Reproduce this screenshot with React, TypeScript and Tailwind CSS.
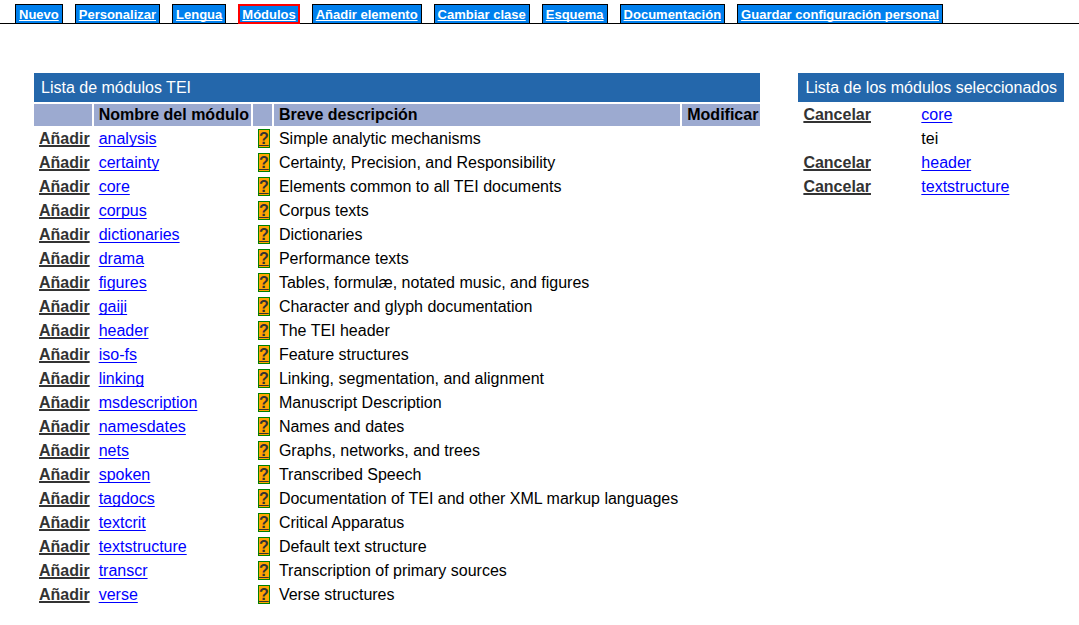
const tabs = [
  "Nuevo",
  "Personalizar",
  "Lengua",
  "Módulos",
  "Añadir elemento",
  "Cambiar clase",
  "Esquema",
  "Documentación",
  "Guardar configuración personal",
];

const activeTab = "Módulos";

const modules = [
  { name: "analysis", description: "Simple analytic mechanisms" },
  { name: "certainty", description: "Certainty, Precision, and Responsibility" },
  { name: "core", description: "Elements common to all TEI documents" },
  { name: "corpus", description: "Corpus texts" },
  { name: "dictionaries", description: "Dictionaries" },
  { name: "drama", description: "Performance texts" },
  { name: "figures", description: "Tables, formulæ, notated music, and figures" },
  { name: "gaiji", description: "Character and glyph documentation" },
  { name: "header", description: "The TEI header" },
  { name: "iso-fs", description: "Feature structures" },
  { name: "linking", description: "Linking, segmentation, and alignment" },
  { name: "msdescription", description: "Manuscript Description" },
  { name: "namesdates", description: "Names and dates" },
  { name: "nets", description: "Graphs, networks, and trees" },
  { name: "spoken", description: "Transcribed Speech" },
  { name: "tagdocs", description: "Documentation of TEI and other XML markup languages" },
  { name: "textcrit", description: "Critical Apparatus" },
  { name: "textstructure", description: "Default text structure" },
  { name: "transcr", description: "Transcription of primary sources" },
  { name: "verse", description: "Verse structures" },
];

const selected = [
  { name: "core", removable: true },
  { name: "tei", removable: false },
  { name: "header", removable: true },
  { name: "textstructure", removable: true },
];

const cell = "h-[22px] py-0 pl-[5px] pr-[2px] text-left align-middle";
const headCell = `${cell} bg-[#9caad0] font-bold`;
const titleCell = "h-[29px] bg-[#2467ab] px-[7px] py-0 text-left font-normal text-white";
const tableStyle = "border-separate border-spacing-0.5 whitespace-nowrap text-base leading-[22px]";
const lined = "underline [text-decoration-skip-ink:none]";

function Action({ label }: { label: string }) {
  return (
    <a href="#" className={`font-bold text-[#333333] decoration-2 ${lined}`}>
      {label}
    </a>
  );
}

function ModuleLink({ name }: { name: string }) {
  return (
    <a href={`#${name}`} className={`text-[#0000ff] ${lined} underline-offset-2`}>
      {name}
    </a>
  );
}

function TabBar() {
  return (
    <nav className="border-b border-black pl-[15px] pt-1">
      <ul className="-mb-px flex gap-3">
        {tabs.map((tab) => (
          <li key={tab} className="flex">
            <a
              href="#"
              aria-current={tab === activeTab ? "page" : undefined}
              className={`flex h-5 items-start whitespace-nowrap bg-[#0080ee] text-[13px] font-bold leading-4 text-white ${lined} underline-offset-1 ${
                tab === activeTab ? "border-2 border-[#ff0000] px-[2px] pt-px" : "border border-black px-[3px] pt-[2px]"
              }`}
            >
              {tab}
            </a>
          </li>
        ))}
      </ul>
    </nav>
  );
}

function ModuleTable() {
  return (
    <table className={tableStyle}>
      <thead>
        <tr>
          <th colSpan={5} className={titleCell}>
            Lista de módulos TEI
          </th>
        </tr>
        <tr>
          <th className={headCell}></th>
          <th className={headCell}>Nombre del módulo</th>
          <th className={headCell}></th>
          <th className={headCell}>Breve descripción</th>
          <th className={headCell}>Modificar</th>
        </tr>
      </thead>
      <tbody>
        {modules.map(({ name, description }) => (
          <tr key={name}>
            <td className={cell}>
              <Action label="Añadir" />
            </td>
            <td className={cell}>
              <ModuleLink name={name} />
            </td>
            <td className={`${cell} pb-px`}>
              <a
                href={`#${name}-info`}
                className={`flex h-[19px] w-3 items-center justify-center border border-[#008000] bg-[#ffa500] font-bold text-[#333333] ${lined}`}
              >
                ?
              </a>
            </td>
            <td className={cell}>{description}</td>
            <td className={cell}></td>
          </tr>
        ))}
      </tbody>
    </table>
  );
}

function SelectedTable() {
  return (
    <table className={tableStyle}>
      <thead>
        <tr>
          <th colSpan={2} className={titleCell}>
            Lista de los módulos seleccionados
          </th>
        </tr>
      </thead>
      <tbody>
        {selected.map(({ name, removable }) => (
          <tr key={name}>
            <td className={cell}>{removable && <Action label="Cancelar" />}</td>
            <td className={cell}>{removable ? <ModuleLink name={name} /> : name}</td>
          </tr>
        ))}
      </tbody>
    </table>
  );
}

export default function App() {
  return (
    <div className="bg-white font-['Liberation_Sans',Arial,sans-serif] text-black">
      <TabBar />
      <main className="flex items-start gap-[34px] pl-8 pt-[47px]">
        <ModuleTable />
        <SelectedTable />
      </main>
    </div>
  );
}
